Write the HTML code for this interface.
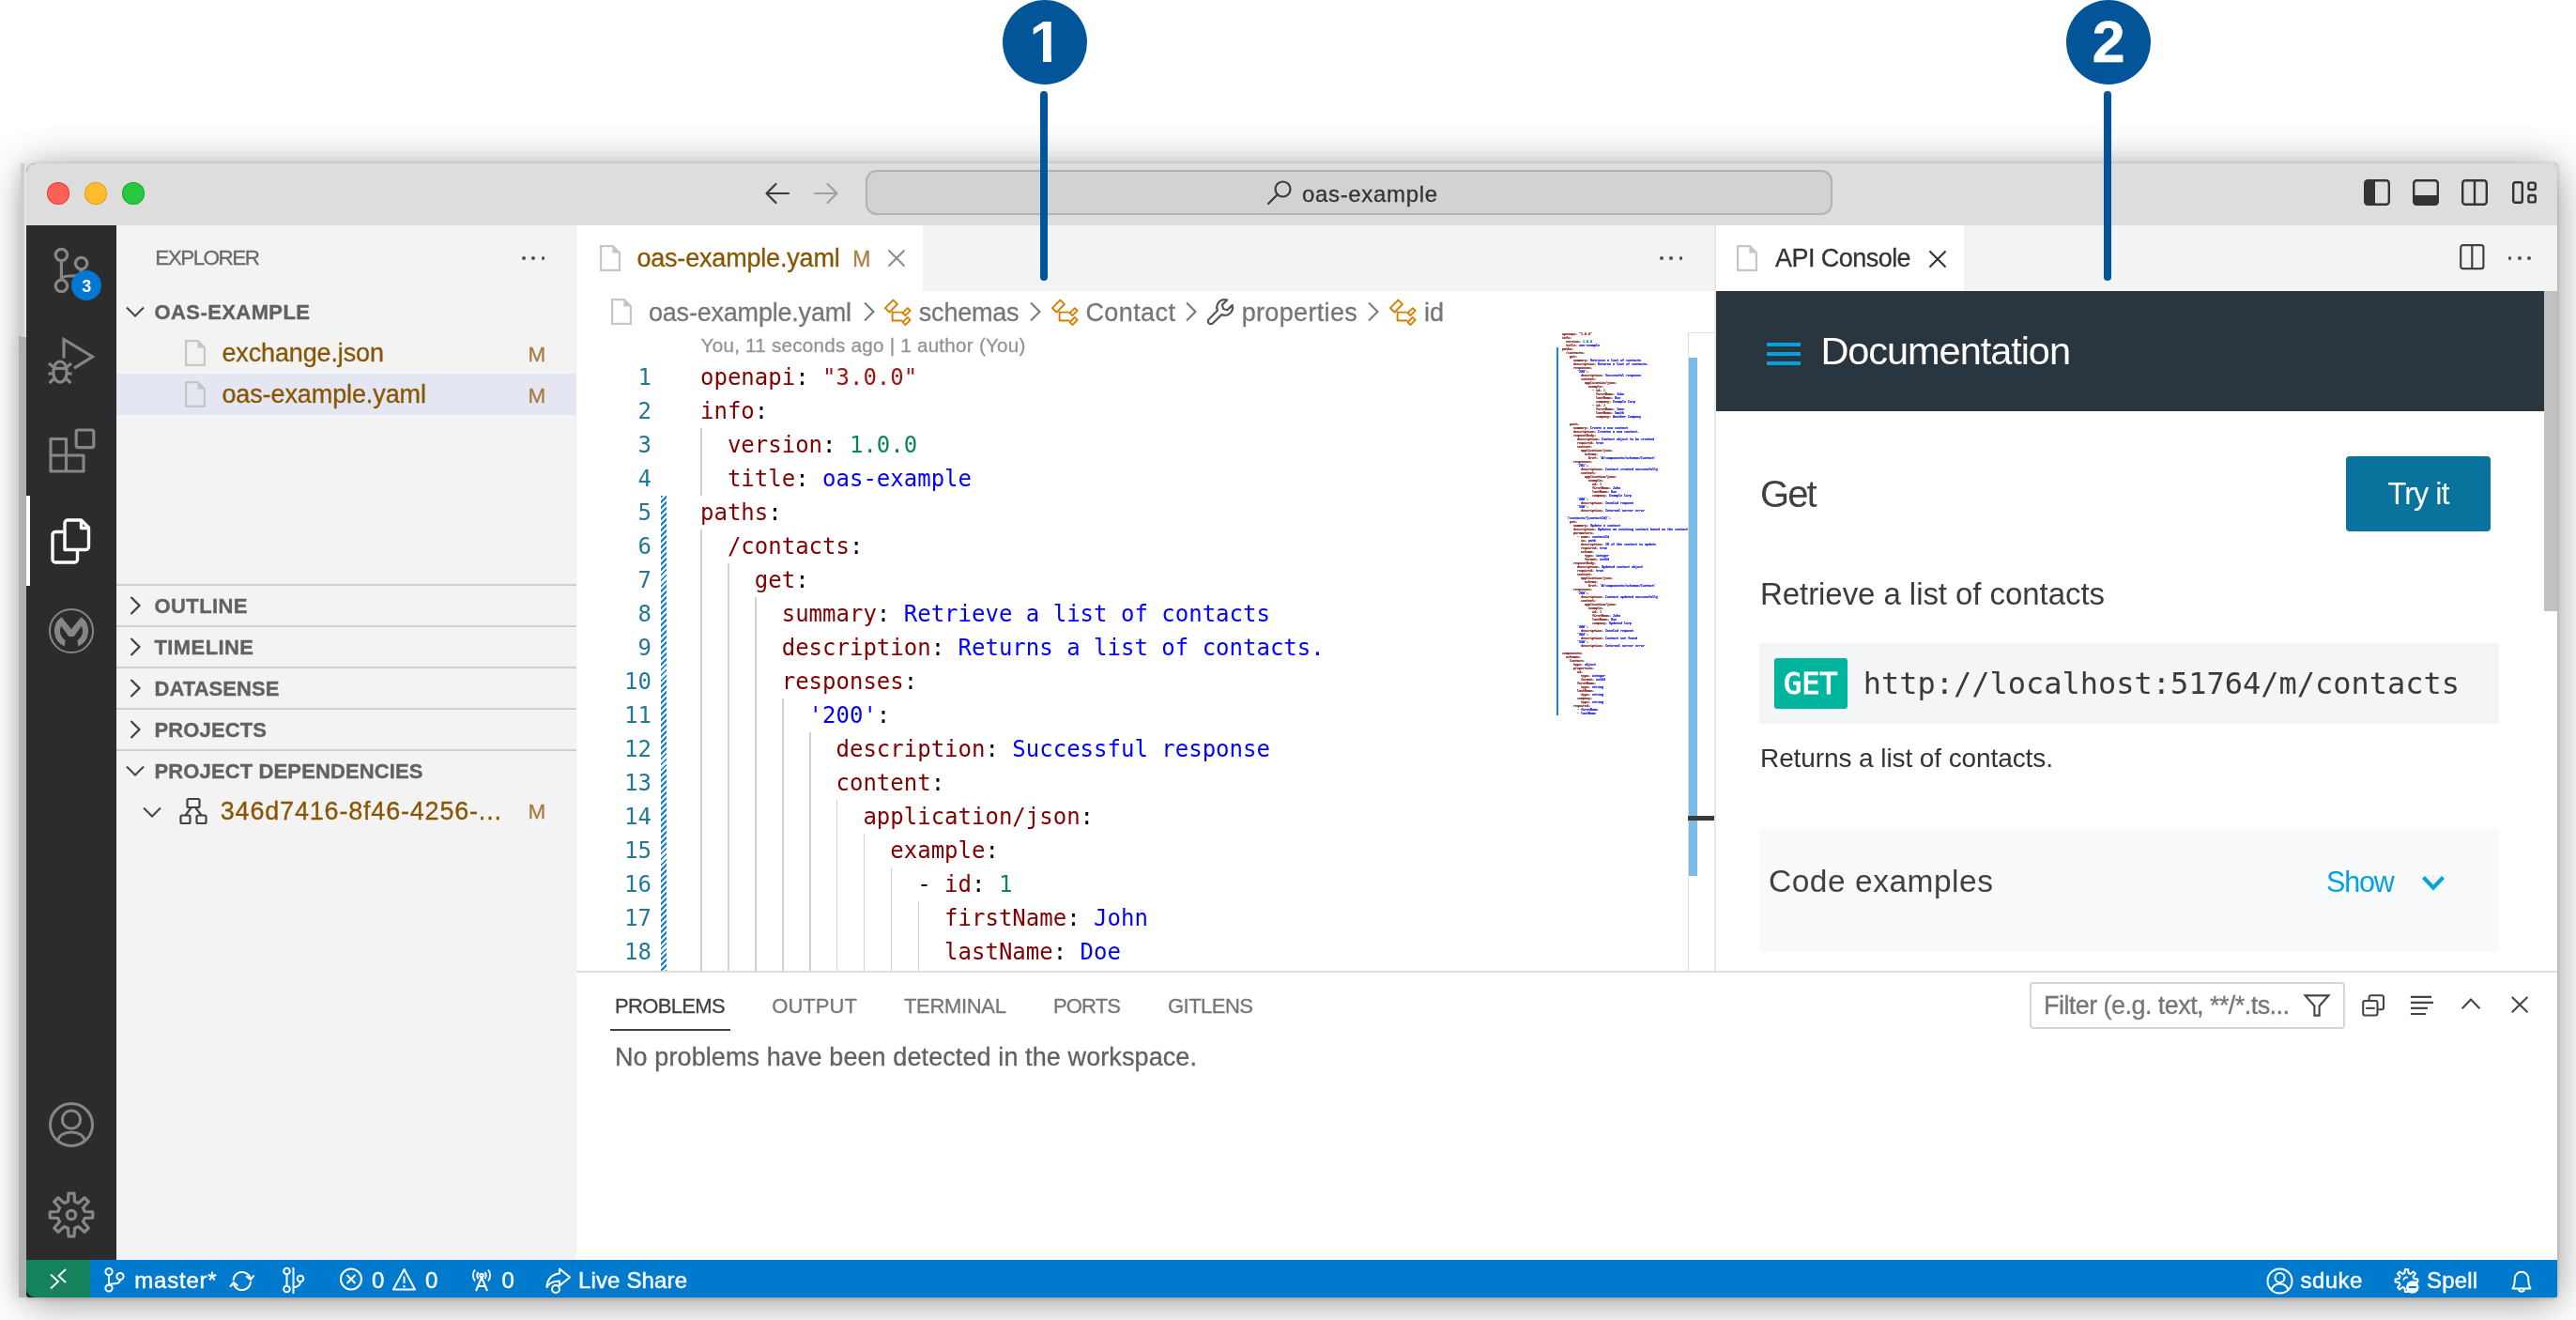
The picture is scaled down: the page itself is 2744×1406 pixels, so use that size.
<!DOCTYPE html>
<html lang="en"><head><meta charset="utf-8"><title>oas-example — API Console</title>
<style>
html,body{margin:0;padding:0;background:#fff;}
body{width:2744px;height:1406px;position:relative;overflow:hidden;}
#root{position:absolute;left:0;top:0;width:2744px;height:1406px;overflow:hidden;will-change:transform;}
#root div,#root svg,#root span.t,#root pre{position:absolute;}
span.t{white-space:pre;line-height:1;}
svg{overflow:visible;}
pre.mm{margin:0;font:bold 24px/36px "DejaVu Sans Mono","Liberation Mono",monospace;color:#000;transform-origin:0 0;transform:scale(0.1384,0.1111);-webkit-text-stroke:1.1px;}
pre.mm i{font-style:normal}pre.mm .k{color:#800000}pre.mm .s{color:#0000ff}pre.mm .q{color:#a31515}pre.mm .n{color:#098658}
</style></head>
<body><div id="root">
<div style="left:28px;top:174px;width:2696px;height:1208px;background:#dddddd;border-radius:11px 4px 3px 3px;box-shadow:0 5px 44px rgba(0,0,0,.42),0 1px 5px rgba(0,0,0,.22);"></div>
<div style="left:22px;top:174px;width:6px;height:186px;background:#cfcfd1;box-shadow:0 0 14px rgba(0,0,0,.12);"></div>
<div style="left:20px;top:358px;width:8px;height:1024px;background:#aeafb1;box-shadow:0 0 16px rgba(0,0,0,.16);"></div>
<div style="left:22px;top:174px;width:4px;height:185px;background:#cfcfd1;"></div>
<div style="left:26px;top:174px;width:2px;height:185px;background:#e6e6e8;"></div>
<div style="left:28px;top:174px;width:2696px;height:1208px;border-radius:11px 4px 3px 3px;overflow:hidden;background:#1f1f29;">
<div style="left:-28px;top:-174px;width:2744px;height:1406px;">
<div style="left:28px;top:174px;width:2696px;height:66px;background:#dddddd;"></div>
<div style="left:50px;top:194px;width:24px;height:24px;background:#fe5f57;border-radius:50%;box-shadow:inset 0 0 0 1px #e14640;"></div>
<div style="left:90px;top:194px;width:24px;height:24px;background:#febc2e;border-radius:50%;box-shadow:inset 0 0 0 1px #dfa123;"></div>
<div style="left:130px;top:194px;width:24px;height:24px;background:#28c840;border-radius:50%;box-shadow:inset 0 0 0 1px #1dad2b;"></div>
<svg style="left:813px;top:192px;" width="30" height="28" viewBox="0 0 30 28"><path d="M27 14H4M13.5 4L3.5 14l10 10" fill="none" stroke="#3b3b3b" stroke-width="2.2" stroke-linecap="round" stroke-linejoin="round"/></svg>
<svg style="left:865px;top:192px;" width="30" height="28" viewBox="0 0 30 28"><path d="M3 14h23M16.5 4l10 10-10 10" fill="none" stroke="#a0a0a0" stroke-width="2.2" stroke-linecap="round" stroke-linejoin="round"/></svg>
<div style="left:922px;top:181px;width:1030px;height:48px;background:#d2d2d2;border-radius:12px;box-shadow:inset 0 0 0 2px #b2b2b2;"></div>
<svg style="left:1349px;top:191px;" width="28" height="28" viewBox="0 0 28 28"><circle cx="17.5" cy="10.5" r="8" fill="none" stroke="#3b3b3b" stroke-width="2.2"/><path d="M11.8 16.2L2 26" stroke="#3b3b3b" stroke-width="2.2" stroke-linecap="round"/></svg>
<span id="t1" class="t" style="left:1387px;top:194.5px;font-size:24px;color:#333333;font-family:'Liberation Sans', sans-serif;-webkit-text-stroke:0.3px;letter-spacing:0.659px;">oas-example</span>
<svg style="left:2518px;top:191px;" width="28" height="28" viewBox="0 0 28 28"><rect x="1.2" y="1.2" width="25.6" height="25.6" rx="3" fill="none" stroke="#333" stroke-width="2.4"/><path d="M1.2 4a3 3 0 0 1 3-2.8H12v25.6H4.2a3 3 0 0 1-3-3z" fill="#333"/></svg>
<svg style="left:2570px;top:191px;" width="28" height="28" viewBox="0 0 28 28"><rect x="1.2" y="1.2" width="25.6" height="25.6" rx="3" fill="none" stroke="#333" stroke-width="2.4"/><path d="M1.2 17h25.6v6.8a3 3 0 0 1-3 3H4.2a3 3 0 0 1-3-3z" fill="#333"/></svg>
<svg style="left:2622px;top:191px;" width="28" height="28" viewBox="0 0 28 28"><rect x="1.2" y="1.2" width="25.6" height="25.6" rx="3" fill="none" stroke="#333" stroke-width="2.4"/><path d="M14 1.2v25.6" stroke="#333" stroke-width="2.4"/></svg>
<svg style="left:2676px;top:193px;" width="28" height="24" viewBox="0 0 28 24"><rect x="1.2" y="1.2" width="9.6" height="21.6" rx="2" fill="none" stroke="#333" stroke-width="2.4"/><rect x="17.4" y="1.6" width="7.4" height="7.4" rx="2" fill="none" stroke="#333" stroke-width="2.4"/><rect x="17.4" y="15" width="7.4" height="7.4" rx="2" fill="none" stroke="#333" stroke-width="2.4"/></svg>
<div style="left:28px;top:240px;width:96px;height:1102px;background:#2c2c2c;"></div>
<svg style="left:48px;top:256px;" width="64" height="64" viewBox="0 0 64 64"><g fill="none" stroke="#868686" stroke-width="3.2"><circle cx="17.4" cy="15.5" r="6.2"/><circle cx="38.6" cy="24.6" r="6.2"/><circle cx="17.4" cy="48.4" r="6.2"/><path d="M17.4 21.7v20.5"/><path d="M38.6 30.8c0 6-4 7.2-10 7.2h-4c-4 0-7.2 1.5-7.2 5"/></g></svg>
<div style="left:76px;top:288px;width:32px;height:32px;background:#0078d4;border-radius:50%;"></div>
<span id="t2" class="t" style="left:87.2px;top:295.9px;font-size:18px;color:#ffffff;font-family:'Liberation Sans', sans-serif;font-weight:700;">3</span>
<svg style="left:48px;top:352px;" width="64" height="64" viewBox="0 0 64 64"><g fill="none" stroke="#868686" stroke-width="3.2" stroke-linejoin="miter"><path d="M20 29.5V9.5L50.5 28 31 40.2"/><ellipse cx="16" cy="44" rx="7.2" ry="11"/><path d="M9 40.5h14"/><path d="M4 35l5.5 4.5M28 35l-5.5 4.5M3.5 46h5.5M23 46h5.5M4.5 56l5.5-5M27.5 56l-5.5-5"/></g></svg>
<svg style="left:48px;top:448px;" width="64" height="64" viewBox="0 0 64 64"><g fill="none" stroke="#868686" stroke-width="3.2" stroke-linejoin="round"><path d="M6 19.5h16.5v17.5H41V54H6z"/><path d="M22.5 37V54M6 37h16.5"/><rect x="33.2" y="10" width="18.6" height="18.6" rx="2"/></g></svg>
<div style="left:28px;top:528px;width:4px;height:96px;background:#ffffff;"></div>
<svg style="left:48px;top:544px;" width="64" height="64" viewBox="0 0 64 64"><g fill="none" stroke="#fff" stroke-width="3.4" stroke-linejoin="round"><path d="M21 41.5V13a3 3 0 0 1 3-3h14.5l8 8V38.5a3 3 0 0 1-3 3z"/><path d="M38.5 10.5v8h8"/><path d="M19.5 22.5H11a3 3 0 0 0-3 3V52a3 3 0 0 0 3 3h20.5a3 3 0 0 0 3-3v-9"/></g></svg>
<svg style="left:46px;top:642px;" width="60" height="60" viewBox="0 0 60 60"><circle cx="30" cy="30" r="23.1" fill="none" stroke="#868686" stroke-width="2"/><path d="M19.500 15.200A18.100 18.100 0 0 0 22.700 46.500L23.600 40.200A12 12 0 0 1 19.100 24.800L27.300 35.900L32.700 35.900L40.900 24.800A12 12 0 0 1 36.400 40.200L37.300 46.500A18.100 18.100 0 0 0 40.500 15.200L29.900 28.200Z" fill="#868686"/></svg>
<svg style="left:48px;top:1170px;" width="56" height="56" viewBox="0 0 56 56"><g fill="none" stroke="#868686" stroke-width="3"><circle cx="28" cy="28" r="22.5"/><circle cx="28" cy="22.5" r="9.6"/><path d="M13.200 45.200c1.800-5.800 7.300-9.200 14.800-9.200s13 3.400 14.800 9.200"/></g></svg>
<svg style="left:48px;top:1266px;" width="56" height="56" viewBox="0 0 56 56"><g fill="none" stroke="#868686" stroke-width="3.2" stroke-linejoin="round"><path d="M24.5 13.8 L24.9 5.2 L31.1 5.2 L31.5 13.8 L35.5 15.5 L42.0 9.7 L46.3 14.0 L40.5 20.5 L42.2 24.5 L50.8 24.9 L50.8 31.1 L42.2 31.5 L40.5 35.5 L46.3 42.0 L42.0 46.3 L35.5 40.5 L31.5 42.2 L31.1 50.8 L24.9 50.8 L24.5 42.2 L20.5 40.5 L14.0 46.3 L9.7 42.0 L15.5 35.5 L13.8 31.5 L5.2 31.1 L5.2 24.9 L13.8 24.5 L15.5 20.5 L9.7 14.0 L14.0 9.7 L20.5 15.5Z"/><circle cx="28" cy="28" r="4.700"/></g></svg>
<div style="left:124px;top:240px;width:490px;height:1102px;background:#f3f3f3;"></div>
<span id="t3" class="t" style="left:165.3px;top:264.17px;font-size:22.5px;color:#6a6a6a;font-family:'Liberation Sans', sans-serif;-webkit-text-stroke:0.3px;letter-spacing:-1.564px;">EXPLORER</span>
<div style="left:556.2px;top:273.2px;width:3.8px;height:3.8px;background:#505050;border-radius:50%;"></div>
<div style="left:566.4000000000001px;top:273.2px;width:3.8px;height:3.8px;background:#505050;border-radius:50%;"></div>
<div style="left:576.6px;top:273.2px;width:3.8px;height:3.8px;background:#505050;border-radius:50%;"></div>
<svg style="left:132px;top:320px;" width="24" height="24" viewBox="0 0 24 24"><path d="M3 7.5l9 9 9-9" fill="none" stroke="#424242" stroke-width="2" stroke-linejoin="miter"/></svg>
<span id="t4" class="t" style="left:164.5px;top:322.0px;font-size:22px;color:#616161;font-family:'Liberation Sans', sans-serif;font-weight:700;letter-spacing:0.414px;-webkit-text-stroke:0.35px;">OAS-EXAMPLE</span>
<div style="left:124px;top:398px;width:490px;height:44px;background:#e4e6f1;"></div>
<svg style="left:197px;top:362px;" width="22" height="28" viewBox="0 0 22 28"><path d="M1.1 1.1h12.8l7 7V26.9H1.1z" fill="none" stroke="#c6c6c6" stroke-width="2.2" stroke-linejoin="miter"/><path d="M13.4 1.1v7.5h7.5z" fill="#c6c6c6"/></svg>
<span id="t5" class="t" style="left:236.4px;top:363.15px;font-size:27px;color:#895503;font-family:'Liberation Sans', sans-serif;-webkit-text-stroke:0.3px;letter-spacing:-0.128px;">exchange.json</span>
<span id="t6" class="t" style="left:562.6px;top:366.57px;font-size:22.5px;color:#a57c45;font-family:'Liberation Sans', sans-serif;-webkit-text-stroke:0.3px;">M</span>
<svg style="left:197px;top:406px;" width="22" height="28" viewBox="0 0 22 28"><path d="M1.1 1.1h12.8l7 7V26.9H1.1z" fill="none" stroke="#c6c6c6" stroke-width="2.2" stroke-linejoin="miter"/><path d="M13.4 1.1v7.5h7.5z" fill="#c6c6c6"/></svg>
<span id="t7" class="t" style="left:236.4px;top:407.15px;font-size:27px;color:#895503;font-family:'Liberation Sans', sans-serif;-webkit-text-stroke:0.3px;letter-spacing:-0.1px;">oas-example.yaml</span>
<span id="t8" class="t" style="left:562.6px;top:410.57px;font-size:22.5px;color:#a57c45;font-family:'Liberation Sans', sans-serif;-webkit-text-stroke:0.3px;">M</span>
<div style="left:124px;top:622px;width:490px;height:2px;background:#cfcfcf;"></div>
<svg style="left:132px;top:633px;" width="24" height="24" viewBox="0 0 24 24"><path d="M7.5 3l9 9-9 9" fill="none" stroke="#424242" stroke-width="2.2" stroke-linejoin="miter"/></svg>
<span id="t9" class="t" style="left:164.5px;top:634.9px;font-size:22px;color:#616161;font-family:'Liberation Sans', sans-serif;font-weight:700;letter-spacing:0.406px;-webkit-text-stroke:0.35px;">OUTLINE</span>
<div style="left:124px;top:666px;width:490px;height:2px;background:#cfcfcf;"></div>
<svg style="left:132px;top:677px;" width="24" height="24" viewBox="0 0 24 24"><path d="M7.5 3l9 9-9 9" fill="none" stroke="#424242" stroke-width="2.2" stroke-linejoin="miter"/></svg>
<span id="t10" class="t" style="left:164.5px;top:678.9px;font-size:22px;color:#616161;font-family:'Liberation Sans', sans-serif;font-weight:700;letter-spacing:0.404px;-webkit-text-stroke:0.35px;">TIMELINE</span>
<div style="left:124px;top:710px;width:490px;height:2px;background:#cfcfcf;"></div>
<svg style="left:132px;top:721px;" width="24" height="24" viewBox="0 0 24 24"><path d="M7.5 3l9 9-9 9" fill="none" stroke="#424242" stroke-width="2.2" stroke-linejoin="miter"/></svg>
<span id="t11" class="t" style="left:164.5px;top:722.9px;font-size:22px;color:#616161;font-family:'Liberation Sans', sans-serif;font-weight:700;letter-spacing:0.072px;-webkit-text-stroke:0.35px;">DATASENSE</span>
<div style="left:124px;top:754px;width:490px;height:2px;background:#cfcfcf;"></div>
<svg style="left:132px;top:765px;" width="24" height="24" viewBox="0 0 24 24"><path d="M7.5 3l9 9-9 9" fill="none" stroke="#424242" stroke-width="2.2" stroke-linejoin="miter"/></svg>
<span id="t12" class="t" style="left:164.5px;top:766.9px;font-size:22px;color:#616161;font-family:'Liberation Sans', sans-serif;font-weight:700;letter-spacing:0.129px;-webkit-text-stroke:0.35px;">PROJECTS</span>
<div style="left:124px;top:798px;width:490px;height:2px;background:#cfcfcf;"></div>
<svg style="left:132px;top:809px;" width="24" height="24" viewBox="0 0 24 24"><path d="M3 7.5l9 9 9-9" fill="none" stroke="#424242" stroke-width="2" stroke-linejoin="miter"/></svg>
<span id="t13" class="t" style="left:164.5px;top:810.9px;font-size:22px;color:#616161;font-family:'Liberation Sans', sans-serif;font-weight:700;letter-spacing:0.125px;-webkit-text-stroke:0.35px;">PROJECT DEPENDENCIES</span>
<svg style="left:150px;top:852.5px;" width="24" height="24" viewBox="0 0 24 24"><path d="M3 7.5l9 9 9-9" fill="none" stroke="#424242" stroke-width="2" stroke-linejoin="miter"/></svg>
<svg style="left:191px;top:849px;" width="30" height="30" viewBox="0 0 30 30"><g fill="none" stroke="#424242" stroke-width="2.2" stroke-linejoin="round"><rect x="8.5" y="2" width="13" height="9" rx="1.5"/><rect x="1.5" y="19.5" width="10" height="8.500" rx="1.5"/><rect x="18.5" y="19.5" width="10" height="8.500" rx="1.5"/><path d="M12.5 11.500L6.5 19.500M17.5 11.500l6 8"/></g></svg>
<span id="t14" class="t" style="left:234.8px;top:850.95px;font-size:27px;color:#895503;font-family:'Liberation Sans', sans-serif;-webkit-text-stroke:0.3px;letter-spacing:0.808px;">346d7416-8f46-4256-...</span>
<span id="t15" class="t" style="left:562.6px;top:854.38px;font-size:22.5px;color:#a57c45;font-family:'Liberation Sans', sans-serif;-webkit-text-stroke:0.3px;">M</span>
<div style="left:614px;top:240px;width:2110px;height:70px;background:#f3f3f3;"></div>
<div style="left:614px;top:310px;width:1212px;height:724px;background:#ffffff;"></div>
<div style="left:614px;top:240px;width:369px;height:70px;background:#ffffff;"></div>
<svg style="left:639px;top:261px;" width="22" height="28" viewBox="0 0 22 28"><path d="M1.1 1.1h12.8l7 7V26.9H1.1z" fill="none" stroke="#c6c6c6" stroke-width="2.2" stroke-linejoin="miter"/><path d="M13.4 1.1v7.5h7.5z" fill="#c6c6c6"/></svg>
<span id="t16" class="t" style="left:678.4px;top:261.95px;font-size:27px;color:#895503;font-family:'Liberation Sans', sans-serif;-webkit-text-stroke:0.3px;letter-spacing:-0.186px;">oas-example.yaml</span>
<span id="t17" class="t" style="left:908.2px;top:264.95px;font-size:23px;color:#ad7f45;font-family:'Liberation Sans', sans-serif;-webkit-text-stroke:0.3px;">M</span>
<svg style="left:943.3px;top:263.2px;" width="24" height="24" viewBox="0 0 24 24"><path d="M3.500 3.500l17 17M20.5 3.500l-17 17" stroke="#8c8c8c" stroke-width="2.1" fill="none"/></svg>
<div style="left:1768.2px;top:273.2px;width:3.8px;height:3.8px;background:#505050;border-radius:50%;"></div>
<div style="left:1778.4px;top:273.2px;width:3.8px;height:3.8px;background:#505050;border-radius:50%;"></div>
<div style="left:1788.6000000000001px;top:273.2px;width:3.8px;height:3.8px;background:#505050;border-radius:50%;"></div>
<svg style="left:651px;top:318px;" width="22" height="28" viewBox="0 0 22 28"><path d="M1.1 1.1h12.8l7 7V26.9H1.1z" fill="none" stroke="#c6c6c6" stroke-width="2.2" stroke-linejoin="miter"/><path d="M13.4 1.1v7.5h7.5z" fill="#c6c6c6"/></svg>
<span id="t18" class="t" style="left:691px;top:320.05px;font-size:27px;color:#767676;font-family:'Liberation Sans', sans-serif;-webkit-text-stroke:0.3px;letter-spacing:-0.206px;">oas-example.yaml</span>
<svg style="left:919px;top:320px;" width="14" height="24" viewBox="0 0 14 24"><path d="M2 2.500l9.500 9.500L2 21.500" fill="none" stroke="#767676" stroke-width="2" /></svg>
<svg style="left:942px;top:318.8px;" width="30" height="30" viewBox="0 0 30 30"><g fill="none" stroke="#d67e00" stroke-width="1.9" stroke-linejoin="round"><rect x="1.400" y="3.900" width="12" height="6.400" transform="rotate(-45 7.400 7.100)"/><path d="M8.600 12.400V22.500H19.400M8.600 13.600H19.600"/><rect x="19.900" y="11.100" width="7.400" height="4" transform="rotate(-45 23.600 13.100)"/><rect x="19.900" y="21" width="7.400" height="4" transform="rotate(-45 23.600 23)"/></g></svg>
<span id="t19" class="t" style="left:978.8px;top:320.05px;font-size:27px;color:#767676;font-family:'Liberation Sans', sans-serif;-webkit-text-stroke:0.3px;letter-spacing:-0.208px;">schemas</span>
<svg style="left:1096px;top:320px;" width="14" height="24" viewBox="0 0 14 24"><path d="M2 2.500l9.500 9.500L2 21.500" fill="none" stroke="#767676" stroke-width="2" /></svg>
<svg style="left:1120px;top:318.8px;" width="30" height="30" viewBox="0 0 30 30"><g fill="none" stroke="#d67e00" stroke-width="1.9" stroke-linejoin="round"><rect x="1.400" y="3.900" width="12" height="6.400" transform="rotate(-45 7.400 7.100)"/><path d="M8.600 12.400V22.500H19.400M8.600 13.600H19.600"/><rect x="19.900" y="11.100" width="7.400" height="4" transform="rotate(-45 23.600 13.100)"/><rect x="19.900" y="21" width="7.400" height="4" transform="rotate(-45 23.600 23)"/></g></svg>
<span id="t20" class="t" style="left:1156.4px;top:320.05px;font-size:27px;color:#767676;font-family:'Liberation Sans', sans-serif;-webkit-text-stroke:0.3px;letter-spacing:0.423px;">Contact</span>
<svg style="left:1262px;top:320px;" width="14" height="24" viewBox="0 0 14 24"><path d="M2 2.500l9.500 9.500L2 21.500" fill="none" stroke="#767676" stroke-width="2" /></svg>
<svg style="left:1285px;top:317px;" width="30" height="30" viewBox="0 0 30 30"><path d="M19.500 2.200a8.300 8.300 0 0 0-7.600 11.500L2.700 23a3 3 0 0 0 4.300 4.300l9.300-9.200A8.300 8.300 0 0 0 27.600 8l-5.300 5.200-4.200-1.200-1.200-4.200 5.200-5.200a8.300 8.300 0 0 0-2.600-.4z" fill="none" stroke="#555" stroke-width="2.2" stroke-linejoin="round"/></svg>
<span id="t21" class="t" style="left:1322.7px;top:320.05px;font-size:27px;color:#767676;font-family:'Liberation Sans', sans-serif;-webkit-text-stroke:0.3px;letter-spacing:0.336px;">properties</span>
<svg style="left:1456px;top:320px;" width="14" height="24" viewBox="0 0 14 24"><path d="M2 2.500l9.500 9.500L2 21.500" fill="none" stroke="#767676" stroke-width="2" /></svg>
<svg style="left:1480px;top:318.8px;" width="30" height="30" viewBox="0 0 30 30"><g fill="none" stroke="#d67e00" stroke-width="1.9" stroke-linejoin="round"><rect x="1.400" y="3.900" width="12" height="6.400" transform="rotate(-45 7.400 7.100)"/><path d="M8.600 12.400V22.500H19.400M8.600 13.600H19.600"/><rect x="19.900" y="11.100" width="7.400" height="4" transform="rotate(-45 23.600 13.100)"/><rect x="19.900" y="21" width="7.400" height="4" transform="rotate(-45 23.600 23)"/></g></svg>
<span id="t22" class="t" style="left:1517px;top:320.05px;font-size:27px;color:#767676;font-family:'Liberation Sans', sans-serif;-webkit-text-stroke:0.3px;letter-spacing:-0.016px;">id</span>
<span id="t23" class="t" style="left:746.6px;top:357.99px;font-size:20.6px;color:#939393;font-family:'Liberation Sans', sans-serif;-webkit-text-stroke:0.3px;letter-spacing:0.262px;">You, 11 seconds ago | 1 author (You)</span>
<div style="left:746.4px;top:456px;width:1.6px;height:36px;background:#d1d1d1;"></div>
<div style="left:746.4px;top:492px;width:1.6px;height:36px;background:#d1d1d1;"></div>
<div style="left:746.4px;top:564px;width:1.6px;height:36px;background:#d1d1d1;"></div>
<div style="left:746.4px;top:600px;width:1.6px;height:36px;background:#d1d1d1;"></div>
<div style="left:775.3px;top:600px;width:1.6px;height:36px;background:#d1d1d1;"></div>
<div style="left:746.4px;top:636px;width:1.6px;height:36px;background:#d1d1d1;"></div>
<div style="left:775.3px;top:636px;width:1.6px;height:36px;background:#d1d1d1;"></div>
<div style="left:804.2px;top:636px;width:1.6px;height:36px;background:#d1d1d1;"></div>
<div style="left:746.4px;top:672px;width:1.6px;height:36px;background:#d1d1d1;"></div>
<div style="left:775.3px;top:672px;width:1.6px;height:36px;background:#d1d1d1;"></div>
<div style="left:804.2px;top:672px;width:1.6px;height:36px;background:#d1d1d1;"></div>
<div style="left:746.4px;top:708px;width:1.6px;height:36px;background:#d1d1d1;"></div>
<div style="left:775.3px;top:708px;width:1.6px;height:36px;background:#d1d1d1;"></div>
<div style="left:804.2px;top:708px;width:1.6px;height:36px;background:#d1d1d1;"></div>
<div style="left:746.4px;top:744px;width:1.6px;height:36px;background:#d1d1d1;"></div>
<div style="left:775.3px;top:744px;width:1.6px;height:36px;background:#d1d1d1;"></div>
<div style="left:804.2px;top:744px;width:1.6px;height:36px;background:#d1d1d1;"></div>
<div style="left:833.1px;top:744px;width:1.6px;height:36px;background:#d1d1d1;"></div>
<div style="left:746.4px;top:780px;width:1.6px;height:36px;background:#d1d1d1;"></div>
<div style="left:775.3px;top:780px;width:1.6px;height:36px;background:#d1d1d1;"></div>
<div style="left:804.2px;top:780px;width:1.6px;height:36px;background:#d1d1d1;"></div>
<div style="left:833.1px;top:780px;width:1.6px;height:36px;background:#d1d1d1;"></div>
<div style="left:862.0px;top:780px;width:1.6px;height:36px;background:#d1d1d1;"></div>
<div style="left:746.4px;top:816px;width:1.6px;height:36px;background:#d1d1d1;"></div>
<div style="left:775.3px;top:816px;width:1.6px;height:36px;background:#d1d1d1;"></div>
<div style="left:804.2px;top:816px;width:1.6px;height:36px;background:#d1d1d1;"></div>
<div style="left:833.1px;top:816px;width:1.6px;height:36px;background:#d1d1d1;"></div>
<div style="left:862.0px;top:816px;width:1.6px;height:36px;background:#d1d1d1;"></div>
<div style="left:746.4px;top:852px;width:1.6px;height:36px;background:#d1d1d1;"></div>
<div style="left:775.3px;top:852px;width:1.6px;height:36px;background:#d1d1d1;"></div>
<div style="left:804.2px;top:852px;width:1.6px;height:36px;background:#d1d1d1;"></div>
<div style="left:833.1px;top:852px;width:1.6px;height:36px;background:#d1d1d1;"></div>
<div style="left:862.0px;top:852px;width:1.6px;height:36px;background:#d1d1d1;"></div>
<div style="left:890.9px;top:852px;width:1.6px;height:36px;background:#d1d1d1;"></div>
<div style="left:746.4px;top:888px;width:1.6px;height:36px;background:#d1d1d1;"></div>
<div style="left:775.3px;top:888px;width:1.6px;height:36px;background:#d1d1d1;"></div>
<div style="left:804.2px;top:888px;width:1.6px;height:36px;background:#d1d1d1;"></div>
<div style="left:833.1px;top:888px;width:1.6px;height:36px;background:#d1d1d1;"></div>
<div style="left:862.0px;top:888px;width:1.6px;height:36px;background:#d1d1d1;"></div>
<div style="left:890.9px;top:888px;width:1.6px;height:36px;background:#d1d1d1;"></div>
<div style="left:919.8px;top:888px;width:1.6px;height:36px;background:#d1d1d1;"></div>
<div style="left:746.4px;top:924px;width:1.6px;height:36px;background:#d1d1d1;"></div>
<div style="left:775.3px;top:924px;width:1.6px;height:36px;background:#d1d1d1;"></div>
<div style="left:804.2px;top:924px;width:1.6px;height:36px;background:#d1d1d1;"></div>
<div style="left:833.1px;top:924px;width:1.6px;height:36px;background:#d1d1d1;"></div>
<div style="left:862.0px;top:924px;width:1.6px;height:36px;background:#d1d1d1;"></div>
<div style="left:890.9px;top:924px;width:1.6px;height:36px;background:#d1d1d1;"></div>
<div style="left:919.8px;top:924px;width:1.6px;height:36px;background:#d1d1d1;"></div>
<div style="left:948.7px;top:924px;width:1.6px;height:36px;background:#d1d1d1;"></div>
<div style="left:746.4px;top:960px;width:1.6px;height:36px;background:#d1d1d1;"></div>
<div style="left:775.3px;top:960px;width:1.6px;height:36px;background:#d1d1d1;"></div>
<div style="left:804.2px;top:960px;width:1.6px;height:36px;background:#d1d1d1;"></div>
<div style="left:833.1px;top:960px;width:1.6px;height:36px;background:#d1d1d1;"></div>
<div style="left:862.0px;top:960px;width:1.6px;height:36px;background:#d1d1d1;"></div>
<div style="left:890.9px;top:960px;width:1.6px;height:36px;background:#d1d1d1;"></div>
<div style="left:919.8px;top:960px;width:1.6px;height:36px;background:#d1d1d1;"></div>
<div style="left:948.7px;top:960px;width:1.6px;height:36px;background:#d1d1d1;"></div>
<div style="left:977.6px;top:960px;width:1.6px;height:36px;background:#d1d1d1;"></div>
<div style="left:746.4px;top:996px;width:1.6px;height:38px;background:#d1d1d1;"></div>
<div style="left:775.3px;top:996px;width:1.6px;height:38px;background:#d1d1d1;"></div>
<div style="left:804.2px;top:996px;width:1.6px;height:38px;background:#d1d1d1;"></div>
<div style="left:833.1px;top:996px;width:1.6px;height:38px;background:#d1d1d1;"></div>
<div style="left:862.0px;top:996px;width:1.6px;height:38px;background:#d1d1d1;"></div>
<div style="left:890.9px;top:996px;width:1.6px;height:38px;background:#d1d1d1;"></div>
<div style="left:919.8px;top:996px;width:1.6px;height:38px;background:#d1d1d1;"></div>
<div style="left:948.7px;top:996px;width:1.6px;height:38px;background:#d1d1d1;"></div>
<div style="left:977.6px;top:996px;width:1.6px;height:38px;background:#d1d1d1;"></div>
<span id="t24" class="t" style="left:679.55px;top:390.44px;font-size:24px;color:#237893;font-family:'DejaVu Sans Mono', 'Liberation Mono', monospace;">1</span>
<span id="t25" class="t" style="left:746.0px;top:390.44px;font-size:24px;color:#800000;font-family:'DejaVu Sans Mono', 'Liberation Mono', monospace;letter-spacing:-0.001px;">openapi</span>
<span id="t26" class="t" style="left:847.15px;top:390.44px;font-size:24px;color:#000000;font-family:'DejaVu Sans Mono', 'Liberation Mono', monospace;letter-spacing:-0.006px;">: </span>
<span id="t27" class="t" style="left:876.05px;top:390.44px;font-size:24px;color:#a31515;font-family:'DejaVu Sans Mono', 'Liberation Mono', monospace;letter-spacing:-0.001px;">"3.0.0"</span>
<span id="t28" class="t" style="left:679.55px;top:426.44px;font-size:24px;color:#237893;font-family:'DejaVu Sans Mono', 'Liberation Mono', monospace;">2</span>
<span id="t29" class="t" style="left:746.0px;top:426.44px;font-size:24px;color:#800000;font-family:'DejaVu Sans Mono', 'Liberation Mono', monospace;letter-spacing:0.001px;">info</span>
<span id="t30" class="t" style="left:803.8px;top:426.44px;font-size:24px;color:#000000;font-family:'DejaVu Sans Mono', 'Liberation Mono', monospace;">:</span>
<span id="t31" class="t" style="left:679.55px;top:462.44px;font-size:24px;color:#237893;font-family:'DejaVu Sans Mono', 'Liberation Mono', monospace;">3</span>
<span id="t32" class="t" style="left:774.9px;top:462.44px;font-size:24px;color:#800000;font-family:'DejaVu Sans Mono', 'Liberation Mono', monospace;letter-spacing:-0.001px;">version</span>
<span id="t33" class="t" style="left:876.05px;top:462.44px;font-size:24px;color:#000000;font-family:'DejaVu Sans Mono', 'Liberation Mono', monospace;letter-spacing:-0.006px;">: </span>
<span id="t34" class="t" style="left:904.95px;top:462.44px;font-size:24px;color:#098658;font-family:'DejaVu Sans Mono', 'Liberation Mono', monospace;">1.0.0</span>
<span id="t35" class="t" style="left:679.55px;top:498.44px;font-size:24px;color:#237893;font-family:'DejaVu Sans Mono', 'Liberation Mono', monospace;">4</span>
<span id="t36" class="t" style="left:774.9px;top:498.44px;font-size:24px;color:#800000;font-family:'DejaVu Sans Mono', 'Liberation Mono', monospace;">title</span>
<span id="t37" class="t" style="left:847.15px;top:498.44px;font-size:24px;color:#000000;font-family:'DejaVu Sans Mono', 'Liberation Mono', monospace;letter-spacing:-0.006px;">: </span>
<span id="t38" class="t" style="left:876.05px;top:498.44px;font-size:24px;color:#0000ff;font-family:'DejaVu Sans Mono', 'Liberation Mono', monospace;">oas-example</span>
<span id="t39" class="t" style="left:679.55px;top:534.44px;font-size:24px;color:#237893;font-family:'DejaVu Sans Mono', 'Liberation Mono', monospace;">5</span>
<span id="t40" class="t" style="left:746.0px;top:534.44px;font-size:24px;color:#800000;font-family:'DejaVu Sans Mono', 'Liberation Mono', monospace;">paths</span>
<span id="t41" class="t" style="left:818.25px;top:534.44px;font-size:24px;color:#000000;font-family:'DejaVu Sans Mono', 'Liberation Mono', monospace;">:</span>
<span id="t42" class="t" style="left:679.55px;top:570.44px;font-size:24px;color:#237893;font-family:'DejaVu Sans Mono', 'Liberation Mono', monospace;">6</span>
<span id="t43" class="t" style="left:774.9px;top:570.44px;font-size:24px;color:#800000;font-family:'DejaVu Sans Mono', 'Liberation Mono', monospace;">/contacts</span>
<span id="t44" class="t" style="left:904.95px;top:570.44px;font-size:24px;color:#000000;font-family:'DejaVu Sans Mono', 'Liberation Mono', monospace;">:</span>
<span id="t45" class="t" style="left:679.55px;top:606.44px;font-size:24px;color:#237893;font-family:'DejaVu Sans Mono', 'Liberation Mono', monospace;">7</span>
<span id="t46" class="t" style="left:803.8px;top:606.44px;font-size:24px;color:#800000;font-family:'DejaVu Sans Mono', 'Liberation Mono', monospace;letter-spacing:-0.005px;">get</span>
<span id="t47" class="t" style="left:847.15px;top:606.44px;font-size:24px;color:#000000;font-family:'DejaVu Sans Mono', 'Liberation Mono', monospace;">:</span>
<span id="t48" class="t" style="left:679.55px;top:642.44px;font-size:24px;color:#237893;font-family:'DejaVu Sans Mono', 'Liberation Mono', monospace;">8</span>
<span id="t49" class="t" style="left:832.7px;top:642.44px;font-size:24px;color:#800000;font-family:'DejaVu Sans Mono', 'Liberation Mono', monospace;letter-spacing:-0.001px;">summary</span>
<span id="t50" class="t" style="left:933.85px;top:642.44px;font-size:24px;color:#000000;font-family:'DejaVu Sans Mono', 'Liberation Mono', monospace;letter-spacing:-0.006px;">: </span>
<span id="t51" class="t" style="left:962.75px;top:642.44px;font-size:24px;color:#0000ff;font-family:'DejaVu Sans Mono', 'Liberation Mono', monospace;">Retrieve a list of contacts</span>
<span id="t52" class="t" style="left:679.55px;top:678.44px;font-size:24px;color:#237893;font-family:'DejaVu Sans Mono', 'Liberation Mono', monospace;">9</span>
<span id="t53" class="t" style="left:832.7px;top:678.44px;font-size:24px;color:#800000;font-family:'DejaVu Sans Mono', 'Liberation Mono', monospace;">description</span>
<span id="t54" class="t" style="left:991.65px;top:678.44px;font-size:24px;color:#000000;font-family:'DejaVu Sans Mono', 'Liberation Mono', monospace;letter-spacing:-0.006px;">: </span>
<span id="t55" class="t" style="left:1020.55px;top:678.44px;font-size:24px;color:#0000ff;font-family:'DejaVu Sans Mono', 'Liberation Mono', monospace;">Returns a list of contacts.</span>
<span id="t56" class="t" style="left:665.1px;top:714.44px;font-size:24px;color:#237893;font-family:'DejaVu Sans Mono', 'Liberation Mono', monospace;">10</span>
<span id="t57" class="t" style="left:832.7px;top:714.44px;font-size:24px;color:#800000;font-family:'DejaVu Sans Mono', 'Liberation Mono', monospace;">responses</span>
<span id="t58" class="t" style="left:962.75px;top:714.44px;font-size:24px;color:#000000;font-family:'DejaVu Sans Mono', 'Liberation Mono', monospace;">:</span>
<span id="t59" class="t" style="left:665.1px;top:750.44px;font-size:24px;color:#237893;font-family:'DejaVu Sans Mono', 'Liberation Mono', monospace;">11</span>
<span id="t60" class="t" style="left:861.6px;top:750.44px;font-size:24px;color:#0000ff;font-family:'DejaVu Sans Mono', 'Liberation Mono', monospace;">'200'</span>
<span id="t61" class="t" style="left:933.85px;top:750.44px;font-size:24px;color:#000000;font-family:'DejaVu Sans Mono', 'Liberation Mono', monospace;">:</span>
<span id="t62" class="t" style="left:665.1px;top:786.44px;font-size:24px;color:#237893;font-family:'DejaVu Sans Mono', 'Liberation Mono', monospace;">12</span>
<span id="t63" class="t" style="left:890.5px;top:786.44px;font-size:24px;color:#800000;font-family:'DejaVu Sans Mono', 'Liberation Mono', monospace;">description</span>
<span id="t64" class="t" style="left:1049.45px;top:786.44px;font-size:24px;color:#000000;font-family:'DejaVu Sans Mono', 'Liberation Mono', monospace;letter-spacing:-0.006px;">: </span>
<span id="t65" class="t" style="left:1078.35px;top:786.44px;font-size:24px;color:#0000ff;font-family:'DejaVu Sans Mono', 'Liberation Mono', monospace;">Successful response</span>
<span id="t66" class="t" style="left:665.1px;top:822.44px;font-size:24px;color:#237893;font-family:'DejaVu Sans Mono', 'Liberation Mono', monospace;">13</span>
<span id="t67" class="t" style="left:890.5px;top:822.44px;font-size:24px;color:#800000;font-family:'DejaVu Sans Mono', 'Liberation Mono', monospace;letter-spacing:-0.001px;">content</span>
<span id="t68" class="t" style="left:991.65px;top:822.44px;font-size:24px;color:#000000;font-family:'DejaVu Sans Mono', 'Liberation Mono', monospace;">:</span>
<span id="t69" class="t" style="left:665.1px;top:858.44px;font-size:24px;color:#237893;font-family:'DejaVu Sans Mono', 'Liberation Mono', monospace;">14</span>
<span id="t70" class="t" style="left:919.4px;top:858.44px;font-size:24px;color:#800000;font-family:'DejaVu Sans Mono', 'Liberation Mono', monospace;letter-spacing:0.001px;">application/json</span>
<span id="t71" class="t" style="left:1150.6px;top:858.44px;font-size:24px;color:#000000;font-family:'DejaVu Sans Mono', 'Liberation Mono', monospace;">:</span>
<span id="t72" class="t" style="left:665.1px;top:894.44px;font-size:24px;color:#237893;font-family:'DejaVu Sans Mono', 'Liberation Mono', monospace;">15</span>
<span id="t73" class="t" style="left:948.3px;top:894.44px;font-size:24px;color:#800000;font-family:'DejaVu Sans Mono', 'Liberation Mono', monospace;letter-spacing:-0.001px;">example</span>
<span id="t74" class="t" style="left:1049.45px;top:894.44px;font-size:24px;color:#000000;font-family:'DejaVu Sans Mono', 'Liberation Mono', monospace;">:</span>
<span id="t75" class="t" style="left:665.1px;top:930.44px;font-size:24px;color:#237893;font-family:'DejaVu Sans Mono', 'Liberation Mono', monospace;">16</span>
<span id="t76" class="t" style="left:746.0px;top:930.44px;font-size:24px;color:#000000;font-family:'DejaVu Sans Mono', 'Liberation Mono', monospace;">                - </span>
<span id="t77" class="t" style="left:1006.1px;top:930.44px;font-size:24px;color:#800000;font-family:'DejaVu Sans Mono', 'Liberation Mono', monospace;letter-spacing:-0.006px;">id</span>
<span id="t78" class="t" style="left:1035.0px;top:930.44px;font-size:24px;color:#000000;font-family:'DejaVu Sans Mono', 'Liberation Mono', monospace;letter-spacing:-0.006px;">: </span>
<span id="t79" class="t" style="left:1063.9px;top:930.44px;font-size:24px;color:#098658;font-family:'DejaVu Sans Mono', 'Liberation Mono', monospace;">1</span>
<span id="t80" class="t" style="left:665.1px;top:966.44px;font-size:24px;color:#237893;font-family:'DejaVu Sans Mono', 'Liberation Mono', monospace;">17</span>
<span id="t81" class="t" style="left:1006.1px;top:966.44px;font-size:24px;color:#800000;font-family:'DejaVu Sans Mono', 'Liberation Mono', monospace;">firstName</span>
<span id="t82" class="t" style="left:1136.15px;top:966.44px;font-size:24px;color:#000000;font-family:'DejaVu Sans Mono', 'Liberation Mono', monospace;letter-spacing:-0.006px;">: </span>
<span id="t83" class="t" style="left:1165.05px;top:966.44px;font-size:24px;color:#0000ff;font-family:'DejaVu Sans Mono', 'Liberation Mono', monospace;letter-spacing:0.001px;">John</span>
<span id="t84" class="t" style="left:665.1px;top:1002.44px;font-size:24px;color:#237893;font-family:'DejaVu Sans Mono', 'Liberation Mono', monospace;">18</span>
<span id="t85" class="t" style="left:1006.1px;top:1002.44px;font-size:24px;color:#800000;font-family:'DejaVu Sans Mono', 'Liberation Mono', monospace;letter-spacing:0.001px;">lastName</span>
<span id="t86" class="t" style="left:1121.7px;top:1002.44px;font-size:24px;color:#000000;font-family:'DejaVu Sans Mono', 'Liberation Mono', monospace;letter-spacing:-0.006px;">: </span>
<span id="t87" class="t" style="left:1150.6px;top:1002.44px;font-size:24px;color:#0000ff;font-family:'DejaVu Sans Mono', 'Liberation Mono', monospace;letter-spacing:-0.005px;">Doe</span>
<div style="left:704px;top:528px;width:6px;height:506px;background:repeating-linear-gradient(135deg,#1b81d6 0 2px,#e8f3fc 2px 4.2px);"></div>
<div style="left:1656px;top:354px;width:141.5px;height:680px;overflow:hidden;"><pre class="mm" style="left:8px;top:0px;"><i class="k">openapi</i>: <i class="q">"3.0.0"</i>
<i class="k">info</i>:
  <i class="k">version</i>: <i class="n">1.0.0</i>
  <i class="k">title</i>: <i class="s">oas-example</i>
<i class="k">paths</i>:
  <i class="k">/contacts</i>:
    <i class="k">get</i>:
      <i class="k">summary</i>: <i class="s">Retrieve a list of contacts</i>
      <i class="k">description</i>: <i class="s">Returns a list of contacts.</i>
      <i class="k">responses</i>:
        <i class="s">'200'</i>:
          <i class="k">description</i>: <i class="s">Successful response</i>
          <i class="k">content</i>:
            <i class="k">application/json</i>:
              <i class="k">example</i>:
                - <i class="k">id</i>: <i class="n">1</i>
                  <i class="k">firstName</i>: <i class="s">John</i>
                  <i class="k">lastName</i>: <i class="s">Doe</i>
                  <i class="k">company</i>: <i class="s">Example Corp</i>
                - <i class="k">id</i>: <i class="n">2</i>
                  <i class="k">firstName</i>: <i class="s">Jane</i>
                  <i class="k">lastName</i>: <i class="s">Smith</i>
                  <i class="k">company</i>: <i class="s">Another Company</i>

    <i class="k">post</i>:
      <i class="k">summary</i>: <i class="s">Create a new contact</i>
      <i class="k">description</i>: <i class="s">Creates a new contact.</i>
      <i class="k">requestBody</i>:
        <i class="k">description</i>: <i class="s">Contact object to be created</i>
        <i class="k">required</i>: <i class="s">true</i>
        <i class="k">content</i>:
          <i class="k">application/json</i>:
            <i class="k">schema</i>:
              <i class="k">$ref</i>: <i class="s">'#/components/schemas/Contact'</i>
      <i class="k">responses</i>:
        <i class="s">'201'</i>:
          <i class="k">description</i>: <i class="s">Contact created successfully</i>
          <i class="k">content</i>:
            <i class="k">application/json</i>:
              <i class="k">example</i>:
                <i class="k">id</i>: <i class="n">3</i>
                <i class="k">firstName</i>: <i class="s">John</i>
                <i class="k">lastName</i>: <i class="s">Doe</i>
                <i class="k">company</i>: <i class="s">Example Corp</i>
        <i class="s">'400'</i>:
          <i class="k">description</i>: <i class="s">Invalid request</i>
        <i class="s">'500'</i>:
          <i class="k">description</i>: <i class="s">Internal server error</i>

  <i class="s">'/contacts/{contactId}'</i>:
    <i class="k">put</i>:
      <i class="k">summary</i>: <i class="s">Update a contact</i>
      <i class="k">description</i>: <i class="s">Updates an existing contact based on the contact ID.</i>
      <i class="k">parameters</i>:
        - <i class="k">name</i>: <i class="s">contactId</i>
          <i class="k">in</i>: <i class="s">path</i>
          <i class="k">description</i>: <i class="s">ID of the contact to update</i>
          <i class="k">required</i>: <i class="s">true</i>
          <i class="k">schema</i>:
            <i class="k">type</i>: <i class="s">integer</i>
            <i class="k">format</i>: <i class="s">int64</i>
      <i class="k">requestBody</i>:
        <i class="k">description</i>: <i class="s">Updated contact object</i>
        <i class="k">required</i>: <i class="s">true</i>
        <i class="k">content</i>:
          <i class="k">application/json</i>:
            <i class="k">schema</i>:
              <i class="k">$ref</i>: <i class="s">'#/components/schemas/Contact'</i>
      <i class="k">responses</i>:
        <i class="s">'200'</i>:
          <i class="k">description</i>: <i class="s">Contact updated successfully</i>
          <i class="k">content</i>:
            <i class="k">application/json</i>:
              <i class="k">example</i>:
                <i class="k">id</i>: <i class="n">3</i>
                <i class="k">firstName</i>: <i class="s">John</i>
                <i class="k">lastName</i>: <i class="s">Doe</i>
                <i class="k">company</i>: <i class="s">Updated Corp</i>
        <i class="s">'400'</i>:
          <i class="k">description</i>: <i class="s">Invalid request</i>
        <i class="s">'404'</i>:
          <i class="k">description</i>: <i class="s">Contact not found</i>
        <i class="s">'500'</i>:
          <i class="k">description</i>: <i class="s">Internal server error</i>

<i class="k">components</i>:
  <i class="k">schemas</i>:
    <i class="k">Contact</i>:
      <i class="k">type</i>: <i class="s">object</i>
      <i class="k">properties</i>:
        <i class="k">id</i>:
          <i class="k">type</i>: <i class="s">integer</i>
          <i class="k">format</i>: <i class="s">int64</i>
        <i class="k">firstName</i>:
          <i class="k">type</i>: <i class="s">string</i>
        <i class="k">lastName</i>:
          <i class="k">type</i>: <i class="s">string</i>
        <i class="k">company</i>:
          <i class="k">type</i>: <i class="s">string</i>
      <i class="k">required</i>:
        - <i class="s">firstName</i>
        - <i class="s">lastName</i></pre></div>
<div style="left:1658px;top:370px;width:2px;height:392px;background:#1787cc;"></div>
<div style="left:1798px;top:354px;width:1px;height:680px;background:#dcdcdc;"></div>
<div style="left:1798px;top:354px;width:28px;height:1px;background:#e0e0e0;"></div>
<div style="left:1799px;top:381px;width:9px;height:552px;background:#7bbce5;"></div>
<div style="left:1798px;top:869px;width:28px;height:5px;background:#3a3a3a;"></div>
<div style="left:1826px;top:240px;width:2px;height:794px;background:#e7e7e7;"></div>
<div style="left:1828px;top:240px;width:264px;height:70px;background:#ffffff;"></div>
<svg style="left:1850px;top:261px;" width="22" height="28" viewBox="0 0 22 28"><path d="M1.1 1.1h12.8l7 7V26.9H1.1z" fill="none" stroke="#c6c6c6" stroke-width="2.2" stroke-linejoin="miter"/><path d="M13.4 1.1v7.5h7.5z" fill="#c6c6c6"/></svg>
<span id="t88" class="t" style="left:1891px;top:261.95px;font-size:27px;color:#333333;font-family:'Liberation Sans', sans-serif;-webkit-text-stroke:0.3px;letter-spacing:-0.549px;">API Console</span>
<svg style="left:2052px;top:264px;" width="24" height="24" viewBox="0 0 24 24"><path d="M3.500 3.500l17 17M20.5 3.500l-17 17" stroke="#333" stroke-width="2.1" fill="none"/></svg>
<svg style="left:2620px;top:260px;" width="27" height="28" viewBox="0 0 27 28"><rect x="1.2" y="1.2" width="24.2" height="25" rx="2.500" fill="none" stroke="#424242" stroke-width="2.2"/><path d="M13.300 1.200v25" stroke="#424242" stroke-width="2.2"/></svg>
<div style="left:2671.7px;top:273.2px;width:3.8px;height:3.8px;background:#505050;border-radius:50%;"></div>
<div style="left:2681.8999999999996px;top:273.2px;width:3.8px;height:3.8px;background:#505050;border-radius:50%;"></div>
<div style="left:2692.1px;top:273.2px;width:3.8px;height:3.8px;background:#505050;border-radius:50%;"></div>
<div style="left:1828px;top:310px;width:896px;height:724px;background:#ffffff;"></div>
<div style="left:1828px;top:310px;width:882px;height:128px;background:#29353f;"></div>
<div style="left:2710px;top:310px;width:14px;height:341px;background:#c1c1c1;"></div>
<div style="left:1882px;top:365px;width:36px;height:4px;background:#00a2df;"></div>
<div style="left:1882px;top:375px;width:36px;height:4px;background:#00a2df;"></div>
<div style="left:1882px;top:385px;width:36px;height:4px;background:#00a2df;"></div>
<span id="t89" class="t" style="left:1939.4px;top:352.62px;font-size:41.5px;color:#ffffff;font-family:'Liberation Sans', sans-serif;letter-spacing:-1.045px;">Documentation</span>
<span id="t90" class="t" style="left:1875px;top:505.8px;font-size:40px;color:#414141;font-family:'Liberation Sans', sans-serif;letter-spacing:-1.942px;">Get</span>
<div style="left:2499px;top:486px;width:154px;height:80px;background:#0a739d;border-radius:4px;"></div>
<span id="t91" class="t" style="left:2543.6px;top:510.27px;font-size:32.5px;color:#ffffff;font-family:'Liberation Sans', sans-serif;letter-spacing:-1.02px;">Try it</span>
<span id="t92" class="t" style="left:1875px;top:615.95px;font-size:33px;color:#3a3b3c;font-family:'Liberation Sans', sans-serif;letter-spacing:-0.064px;">Retrieve a list of contacts</span>
<div style="left:1874px;top:685px;width:788px;height:86px;background:#f4f5f7;"></div>
<div style="left:1890px;top:701px;width:78px;height:54px;background:#00b49d;border-radius:3px;"></div>
<span id="t93" class="t" style="left:1900px;top:711.72px;font-size:32px;color:#ffffff;font-family:'DejaVu Sans Mono', 'Liberation Mono', monospace;letter-spacing:-0.098px;-webkit-text-stroke:1.1px #fff;">GET</span>
<span id="t94" class="t" style="left:1984.8px;top:711.72px;font-size:32px;color:#3a3a3a;font-family:'DejaVu Sans Mono', 'Liberation Mono', monospace;letter-spacing:-0.018px;">http://localhost:51764/m/contacts</span>
<span id="t95" class="t" style="left:1875px;top:793.6px;font-size:28px;color:#333333;font-family:'Liberation Sans', sans-serif;letter-spacing:-0.091px;">Returns a list of contacts.</span>
<div style="left:1874px;top:883px;width:788px;height:131px;background:#f9fafb;"></div>
<span id="t96" class="t" style="left:1884px;top:921.52px;font-size:33.5px;color:#414141;font-family:'Liberation Sans', sans-serif;letter-spacing:0.518px;">Code examples</span>
<span id="t97" class="t" style="left:2478px;top:924.08px;font-size:30.5px;color:#00a2df;font-family:'Liberation Sans', sans-serif;letter-spacing:-1.166px;">Show</span>
<svg style="left:2578px;top:930px;" width="28" height="22" viewBox="0 0 28 22"><path d="M3.500 4.500L14 15.500l10.500-11" fill="none" stroke="#00a2df" stroke-width="4" stroke-linejoin="miter"/></svg>
<div style="left:614px;top:1034px;width:2110px;height:308px;background:#ffffff;"></div>
<div style="left:614px;top:1034px;width:2110px;height:2px;background:#dddddd;"></div>
<span id="t98" class="t" style="left:655px;top:1060.9px;font-size:22px;color:#424242;font-family:'Liberation Sans', sans-serif;-webkit-text-stroke:0.3px;letter-spacing:-0.652px;">PROBLEMS</span>
<div style="left:650px;top:1096px;width:128px;height:2px;background:#424242;"></div>
<span id="t99" class="t" style="left:822.3px;top:1060.9px;font-size:22px;color:#767676;font-family:'Liberation Sans', sans-serif;-webkit-text-stroke:0.3px;letter-spacing:0.029px;">OUTPUT</span>
<span id="t100" class="t" style="left:962.9px;top:1060.9px;font-size:22px;color:#767676;font-family:'Liberation Sans', sans-serif;-webkit-text-stroke:0.3px;letter-spacing:-0.307px;">TERMINAL</span>
<span id="t101" class="t" style="left:1122px;top:1060.9px;font-size:22px;color:#767676;font-family:'Liberation Sans', sans-serif;-webkit-text-stroke:0.3px;letter-spacing:-0.848px;">PORTS</span>
<span id="t102" class="t" style="left:1244px;top:1060.9px;font-size:22px;color:#767676;font-family:'Liberation Sans', sans-serif;-webkit-text-stroke:0.3px;letter-spacing:-0.523px;">GITLENS</span>
<span id="t103" class="t" style="left:655px;top:1113.45px;font-size:27px;color:#616161;font-family:'Liberation Sans', sans-serif;-webkit-text-stroke:0.3px;letter-spacing:0.098px;">No problems have been detected in the workspace.</span>
<div style="left:2162px;top:1046px;width:336px;height:50px;background:#ffffff;box-shadow:inset 0 0 0 2px #d6d6d6;border-radius:4px;"></div>
<span id="t104" class="t" style="left:2177px;top:1057.95px;font-size:27px;color:#767676;font-family:'Liberation Sans', sans-serif;-webkit-text-stroke:0.3px;letter-spacing:-0.557px;">Filter (e.g. text, **/*.ts...</span>
<svg style="left:2454px;top:1057px;" width="28" height="28" viewBox="0 0 28 28"><path d="M1.500 3.400H26.500L16.600 14.500V24.600H11.400V14.500z" fill="none" stroke="#454545" stroke-width="2.1" stroke-linejoin="miter"/></svg>
<svg style="left:2515px;top:1057px;" width="28" height="28" viewBox="0 0 28 28"><g fill="none" stroke="#454545" stroke-width="2.1" stroke-linejoin="round"><path d="M8.600 8.500V5.300a2 2 0 0 1 2-2H22a2 2 0 0 1 2 2V16.300a2 2 0 0 1-2 2H18"/><rect x="2.200" y="9" width="15.300" height="15.500" rx="2"/><path d="M5.200 16.900h9.600"/></g></svg>
<svg style="left:2566px;top:1058px;" width="28" height="26" viewBox="0 0 28 26"><path d="M1.900 3.900H24M1.900 9.900H26M1.900 15.900H20M1.900 22H18" stroke="#454545" stroke-width="2.1" fill="none"/></svg>
<svg style="left:2620px;top:1060px;" width="24" height="20" viewBox="0 0 24 20"><path d="M2.700 14.200L12 4.500l9.400 9.700" fill="none" stroke="#454545" stroke-width="2.1"/></svg>
<svg style="left:2673px;top:1059px;" width="22" height="22" viewBox="0 0 22 22"><path d="M2.800 2.900L19.400 19.200M19.400 2.900L2.800 19.200" stroke="#454545" stroke-width="2.1" fill="none"/></svg>
<div style="left:96px;top:1342px;width:2628px;height:40px;background:#007acc;"></div>
<div style="left:28px;top:1342px;width:68px;height:40px;background:#16825d;border-bottom-left-radius:10px;"></div>
<svg style="left:50px;top:1348px;" width="24" height="28" viewBox="0 0 24 28"><path d="M4 9.500l8 7.500-8 7.500M20 4l-7.500 7 7.500 7" fill="none" stroke="#fff" stroke-width="1.9"/></svg>
<svg style="left:110px;top:1349px;" width="24" height="28" viewBox="0 0 24 28"><g fill="none" stroke="#fff" stroke-width="2"><circle cx="6" cy="5.500" r="3.600"/><circle cx="18" cy="10.500" r="3.600"/><circle cx="6" cy="23" r="3.600"/><path d="M6 9.100v10.300M18 14.100c0 3-2 4-5.500 4.200-3.500.2-6.500.7-6.500 2"/></g></svg>
<span id="t105" class="t" style="left:143.3px;top:1352.3px;font-size:24px;color:#ffffff;font-family:'Liberation Sans', sans-serif;letter-spacing:0.769px;-webkit-text-stroke:0.45px #fff;">master*</span>
<svg style="left:242px;top:1350px;" width="32" height="28" viewBox="0 0 32 28"><g fill="none" stroke="#fff" stroke-width="2" stroke-linejoin="miter"><path d="M6.500 14a9.300 9.300 0 0 1 18.200-2.500M25 15a9.300 9.300 0 0 1-18.200 2.500"/><path d="M20.200 9.300l4.700 3.700 3.700-4.700M11.500 19.700l-4.700-3.700-3.700 4.700"/></g></svg>
<svg style="left:300px;top:1349px;" width="26" height="30" viewBox="0 0 26 30"><g fill="none" stroke="#fff" stroke-width="2"><circle cx="5.500" cy="5" r="3.300"/><circle cx="5.500" cy="24" r="3.300"/><circle cx="20" cy="13" r="3.300"/><path d="M5.500 8.300v12.400M12.500 1v28M20 16.300c0 4-3 5.500-7.500 6"/></g></svg>
<svg style="left:362px;top:1350px;" width="26" height="26" viewBox="0 0 26 26"><g fill="none" stroke="#fff" stroke-width="2"><circle cx="12" cy="12.500" r="11"/><path d="M7.500 8l9 9M16.500 8l-9 9"/></g></svg>
<span id="t106" class="t" style="left:396px;top:1352.3px;font-size:24px;color:#ffffff;font-family:'Liberation Sans', sans-serif;-webkit-text-stroke:0.45px #fff;">0</span>
<svg style="left:418px;top:1350px;" width="26" height="26" viewBox="0 0 26 26"><g fill="none" stroke="#fff" stroke-width="2" stroke-linejoin="round"><path d="M12.500 2L24 23.500H1z"/><path d="M12.500 9.500v7.500M12.500 19v2.500"/></g></svg>
<span id="t107" class="t" style="left:453px;top:1352.3px;font-size:24px;color:#ffffff;font-family:'Liberation Sans', sans-serif;-webkit-text-stroke:0.45px #fff;">0</span>
<svg style="left:500px;top:1349px;" width="28" height="28" viewBox="0 0 28 28"><g fill="none" stroke="#fff" stroke-width="2" stroke-linejoin="round"><path d="M6 3.500a10 10 0 0 0 0 12M20 3.500a10 10 0 0 1 0 12M9.500 6a6 6 0 0 0 0 7M16.500 6a6 6 0 0 1 0 7"/><circle cx="13" cy="9.500" r="1.800"/><path d="M13 11.500L7 26M13 11.500L19 26M9 21h8"/></g></svg>
<span id="t108" class="t" style="left:534.6px;top:1352.3px;font-size:24px;color:#ffffff;font-family:'Liberation Sans', sans-serif;-webkit-text-stroke:0.45px #fff;">0</span>
<svg style="left:580px;top:1349px;" width="30" height="30" viewBox="0 0 30 30"><g fill="none" stroke="#fff" stroke-width="2.1" stroke-linejoin="round"><path d="M16 2.500L27 11.500 16 20.500V15.500C9 15.500 5 17.500 2.500 22 3 13 8 8.500 16 7.500z"/><circle cx="12" cy="24" r="4"/></g></svg>
<span id="t109" class="t" style="left:616px;top:1352.3px;font-size:24px;color:#ffffff;font-family:'Liberation Sans', sans-serif;letter-spacing:0.139px;-webkit-text-stroke:0.45px #fff;">Live Share</span>
<svg style="left:2414px;top:1349.5px;" width="30" height="30" viewBox="0 0 30 30"><g fill="none" stroke="#fff" stroke-width="2"><circle cx="14.500" cy="14.500" r="13"/><circle cx="14.500" cy="11" r="5"/><path d="M5.500 24c1.500-4.500 5-6.500 9-6.500s7.500 2 9 6.500"/></g></svg>
<span id="t110" class="t" style="left:2450.4px;top:1352.3px;font-size:24px;color:#ffffff;font-family:'Liberation Sans', sans-serif;letter-spacing:0.488px;-webkit-text-stroke:0.45px #fff;">sduke</span>
<svg style="left:2551px;top:1351px;" width="28" height="28" viewBox="0 0 28 28"><path d="M10.5 5.0 L10.9 1.1 L14.1 1.1 L14.5 5.0 L16.7 6.0 L19.8 3.5 L22.0 5.7 L19.5 8.8 L20.5 11.0 L24.4 11.4 L24.4 14.6 L20.5 15.0 L19.5 17.2 L22.0 20.3 L19.8 22.5 L16.7 20.0 L14.5 21.0 L14.1 24.9 L10.9 24.9 L10.5 21.0 L8.3 20.0 L5.2 22.5 L3.0 20.3 L5.5 17.2 L4.5 15.0 L0.6 14.6 L0.6 11.4 L4.5 11.0 L5.5 8.8 L3.0 5.7 L5.2 3.5 L8.3 6.0Z" fill="none" stroke="#fff" stroke-width="2" stroke-linejoin="round"/><path d="M9.300 12.800a3.300 3.300 0 0 1 4.600-3" fill="none" stroke="#fff" stroke-width="1.800"/><circle cx="18.800" cy="20" r="6.800" fill="#fff"/><path d="M14.800 20h8" stroke="#007acc" stroke-width="2"/></svg>
<span id="t111" class="t" style="left:2585px;top:1352.3px;font-size:24px;color:#ffffff;font-family:'Liberation Sans', sans-serif;letter-spacing:0.156px;-webkit-text-stroke:0.45px #fff;">Spell</span>
<svg style="left:2674px;top:1350.5px;" width="26" height="28" viewBox="0 0 26 28"><g fill="none" stroke="#fff" stroke-width="2" stroke-linejoin="round"><path d="M2.500 21.500c1.800-3 2.300-6 2.300-10.500a7.200 7.200 0 0 1 14.400 0c0 4.500.5 7.500 2.300 10.500z"/><path d="M9.200 22a2.800 2.800 0 0 0 5.600 0"/></g></svg>
</div></div>
<div style="left:1108.2px;top:97px;width:7.6px;height:202px;background:#03559a;border-radius:4px;"></div>
<div style="left:1068px;top:-0.2px;width:90px;height:90px;background:#03559a;border-radius:50%;"></div>
<div style="left:2241.2px;top:97px;width:7.6px;height:202px;background:#03559a;border-radius:4px;"></div>
<div style="left:2201px;top:-0.2px;width:90px;height:90px;background:#03559a;border-radius:50%;"></div>
<span id="t112" class="t" style="left:1096.4px;top:12.88px;font-size:62.5px;color:#ffffff;font-family:'Liberation Sans', sans-serif;font-weight:700;">1</span>
<div style="left:1094px;top:58.2px;width:16.5px;height:10px;background:#03559a;"></div>
<div style="left:1120.0px;top:58.2px;width:14px;height:10px;background:#03559a;"></div>
<span id="t113" class="t" style="left:2228.8px;top:12.88px;font-size:62.5px;color:#ffffff;font-family:'Liberation Sans', sans-serif;font-weight:700;-webkit-text-stroke:0.7px #fff;">2</span>
</div></body></html>
